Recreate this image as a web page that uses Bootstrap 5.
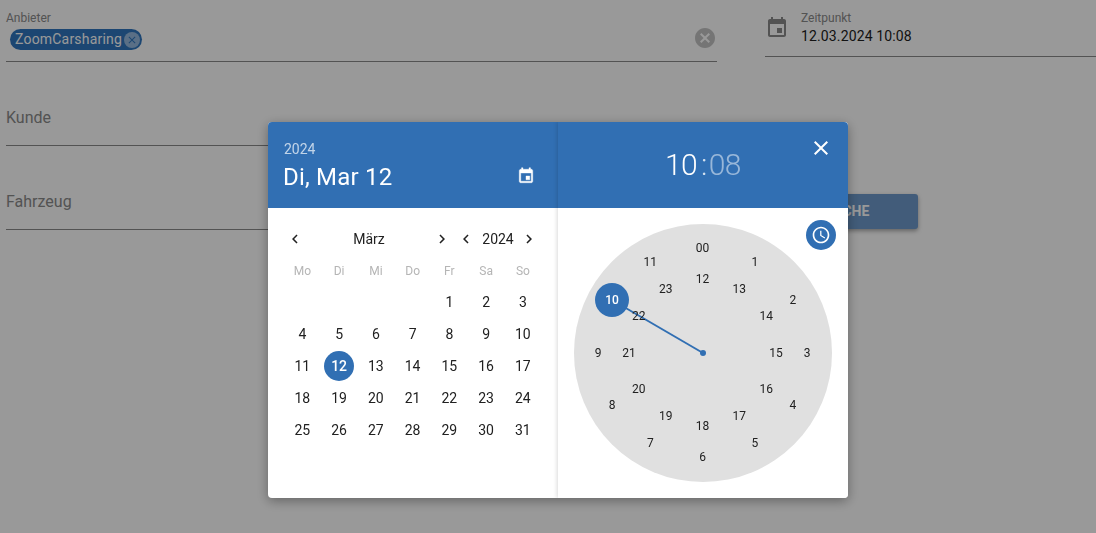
<!DOCTYPE html>
<html lang="de">
<head>
    <meta charset="UTF-8">
    <title>Zeitpunkt</title>
    <link href="https://cdn.jsdelivr.net/npm/bootstrap@5.3.0/dist/css/bootstrap.min.css" rel="stylesheet">
    <style>
        html, body { height: 100%; overflow: hidden; }
        body { background: #fff; color: #212121; font-family: Roboto, "Liberation Sans", sans-serif; font-size: 14px; }

        /* form behind the dialog */
        .form-side { width: 717px; padding-left: 6px; flex-shrink: 0; }
        .time-side { margin-left: 48px; flex-grow: 1; }
        .field-a { height: 62px; border-bottom: 1px solid #8a8a8a; padding-top: 11px; }
        .field-b { height: 84px; border-bottom: 1px solid #8a8a8a; padding-top: 45px; font-size: 16px; line-height: 22px; color: #8a8a8a; }
        .mini-label { font-size: 12px; line-height: 14px; color: #8a8a8a; }
        .pick-chip { margin: 4px 0 0 4px; height: 21px; background: #2f75be; color: #fff; border-radius: 11px; padding: 0 2px 0 5px; font-size: 14px; letter-spacing: .2px; line-height: 21px; width: 132px; }
        .chip-x { width: 16px; height: 16px; border-radius: 50%; background: rgba(255,255,255,.5); }
        .clear-x { margin: 1px 0 0 auto; width: 24px; height: 24px; display: block; fill: #c4c4c4; }
        .time-field { height: 57px; border-bottom: 1px solid #8a8a8a; padding: 11px 0 0 36px; position: relative; }
        .time-field svg { position: absolute; left: 0; top: 16px; fill: #8a8a8a; }
        .time-val { line-height: 20px; margin-top: 1px; letter-spacing: .13px; }
        .search-btn { width: 142px; height: 35px; margin: 137px 0 0 11px; background: #6e9acb; color: #fff; font-weight: 700; font-size: 14px; border: 0; border-radius: 3px; box-shadow: 0 2px 4px rgba(0,0,0,.35); }

        /* dialog */
        .modal-backdrop { --bs-backdrop-opacity: .4; }
        .dt-dialog { position: fixed; z-index: 1060; left: 268px; top: 122px; width: 580px; height: 376px; background: #fff; border-radius: 4px; overflow: hidden; box-shadow: 0 3px 12px rgba(0,0,0,.35); }
        .date-pane { width: 290px; }
        .time-pane { flex-grow: 1; position: relative; background: #fff; box-shadow: -1px 0 4px rgba(0,0,0,.15); }
        .pane-head { height: 86px; background: #316fb3; color: #fff; position: relative; }
        .head-year { position: absolute; left: 16px; top: 18px; font-size: 14px; line-height: 18px; opacity: .7; }
        .head-date { position: absolute; left: 15px; top: 39px; font-size: 24px; line-height: 32px; letter-spacing: .2px; }
        .head-cal { position: absolute; left: 249px; top: 45px; fill: #fff; stroke: #fff; stroke-width: .5; }
        .head-time { position: absolute; left: 107px; top: 25px; font-size: 30px; font-weight: 300; line-height: 36px; letter-spacing: -.6px; white-space: nowrap; }
        .head-time i { font-style: normal; opacity: .8; margin: 0 2px 0 4px; }
        .head-time span { opacity: .5; }
        .head-close { position: absolute; right: 15px; top: 14px; fill: #fff; }

        .month-bar { height: 20px; margin-top: 21px; position: relative; }
        .month-bar svg { position: absolute; top: 1px; fill: #212121; }
        .month-bar b { position: absolute; font-weight: 400; line-height: 20px; transform: translateX(-50%); }
        .day-grid { display: grid; grid-template-columns: repeat(7, 36.75px); grid-template-rows: 27px; grid-auto-rows: 32px; margin: 10px 0 0 16px; text-align: center; line-height: 32px; }
        .week-name { font-size: 12px; color: #b5b5b5; line-height: 24px; }
        .day-on { width: 30px; height: 30px; line-height: 30px; margin: 1px auto; border-radius: 50%; background: #316fb3; color: #fff; font-weight: 500; }

        .clock-face { position: absolute; left: 16px; top: 16px; width: 258px; height: 258px; border-radius: 50%; background: #e0e0e0; }
        .clock-num { position: absolute; width: 30px; height: 20px; margin: -10px 0 0 -15px; text-align: center; font-size: 12px; line-height: 20px; color: #212121; }
        .clock-sel { width: 34px; height: 34px; line-height: 34px; margin: -17px 0 0 -17px; border-radius: 50%; background: #316fb3; color: #fff; font-weight: 500; }
        .clock-hand { position: absolute; left: 0; top: 0; width: 258px; height: 258px; }
        .clock-toggle { position: absolute; right: 12px; top: 12px; width: 30px; height: 30px; border-radius: 50%; background: #316fb3; fill: #fff; }
    </style>
</head>
<body>
    <div class="d-flex">
        <div class="form-side">
            <div class="field-a">
                <div class="mini-label">Anbieter</div>
                <div class="d-flex">
                    <div class="pick-chip d-flex align-items-center justify-content-between">
                        <span>ZoomCarsharing</span>
                        <span class="chip-x d-flex align-items-center justify-content-center">
                            <svg width="12" height="12" viewBox="0 0 24 24" fill="#2f75be"><path d="M19 6.41L17.59 5 12 10.59 6.41 5 5 6.41 10.59 12 5 17.59 6.41 19 12 13.41 17.59 19 19 17.59 13.41 12z"/></svg>
                        </span>
                    </div>
                    <svg class="clear-x" viewBox="0 0 24 24"><path d="M12 2C6.47 2 2 6.47 2 12s4.47 10 10 10 10-4.47 10-10S17.53 2 12 2zm5 13.59L15.59 17 12 13.41 8.41 17 7 15.59 10.59 12 7 8.41 8.41 7 12 10.59 15.59 7 17 8.41 13.41 12 17 15.59z"/></svg>
                </div>
            </div>
            <div class="field-b">Kunde</div>
            <div class="field-b">Fahrzeug</div>
        </div>
        <div class="time-side">
            <div class="time-field">
                <svg width="24" height="24" viewBox="0 0 24 24"><path d="M17 12h-5v5h5v-5zM16 1v2H8V1H6v2H5c-1.11 0-1.99.9-1.99 2L3 19c0 1.1.89 2 2 2h14c1.1 0 2-.9 2-2V5c0-1.1-.9-2-2-2h-1V1h-2zm3 18H5V8h14v11z"/></svg>
                <div class="mini-label">Zeitpunkt</div>
                <div class="time-val">12.03.2024 10:08</div>
            </div>
            <button class="search-btn" type="button">SUCHE</button>
        </div>
    </div>

    <div class="modal-backdrop show"></div>

    <div class="dt-dialog d-flex">
        <div class="date-pane">
            <div class="pane-head">
                <div class="head-year">2024</div>
                <div class="head-date">Di, Mar 12</div>
                <svg class="head-cal" width="18" height="18" viewBox="0 0 24 24"><path d="M17 12h-5v5h5v-5zM16 1v2H8V1H6v2H5c-1.11 0-1.99.9-1.99 2L3 19c0 1.1.89 2 2 2h14c1.1 0 2-.9 2-2V5c0-1.1-.9-2-2-2h-1V1h-2zm3 18H5V8h14v11z"/></svg>
            </div>
            <div class="month-bar">
                <svg style="left:18px" width="18" height="18" viewBox="0 0 24 24"><path d="M15.41 7.41L14 6l-6 6 6 6 1.41-1.41L10.83 12z"/></svg>
                <b style="left:101px">März</b>
                <svg style="left:165px" width="18" height="18" viewBox="0 0 24 24"><path d="M10 6L8.59 7.41 13.17 12l-4.58 4.59L10 18l6-6z"/></svg>
                <svg style="left:189px" width="18" height="18" viewBox="0 0 24 24"><path d="M15.41 7.41L14 6l-6 6 6 6 1.41-1.41L10.83 12z"/></svg>
                <b style="left:230px">2024</b>
                <svg style="left:252px" width="18" height="18" viewBox="0 0 24 24"><path d="M10 6L8.59 7.41 13.17 12l-4.58 4.59L10 18l6-6z"/></svg>
            </div>
            <div class="day-grid" id="days"></div>
        </div>
        <div class="time-pane">
            <div class="pane-head">
                <div class="head-time">10<i>:</i><span>08</span></div>
                <svg class="head-close" width="24" height="24" viewBox="0 0 24 24"><path d="M19 6.41L17.59 5 12 10.59 6.41 5 5 6.41 10.59 12 5 17.59 6.41 19 12 13.41 17.59 19 19 17.59 13.41 12z"/></svg>
            </div>
            <div class="position-relative">
                <div class="clock-face" id="clock">
                    <svg class="clock-hand" viewBox="0 0 258 258">
                        <line x1="129" y1="129" x2="38" y2="76" stroke="#316fb3" stroke-width="2"/>
                        <circle cx="129" cy="129" r="3" fill="#316fb3"/>
                    </svg>
                </div>
                <div class="clock-toggle d-flex align-items-center justify-content-center">
                    <svg width="20" height="20" viewBox="0 0 24 24"><path d="M11.99 2C6.47 2 2 6.48 2 12s4.47 10 9.99 10C17.52 22 22 17.52 22 12S17.52 2 11.99 2zM12 20c-4.42 0-8-3.58-8-8s3.58-8 8-8 8 3.58 8 8-3.58 8-8 8zm.5-13H11v6l5.25 3.15.75-1.23-4.5-2.67z"/></svg>
                </div>
            </div>
        </div>
    </div>

    <script>
        // calendar for März 2024
        const days = document.getElementById("days");
        ["Mo", "Di", "Mi", "Do", "Fr", "Sa", "So"].forEach(function (n) {
            days.insertAdjacentHTML("beforeend", `<div class="week-name">${n}</div>`);
        });
        for (let i = 0; i < 4; i++) days.insertAdjacentHTML("beforeend", "<div></div>");
        for (let d = 1; d <= 31; d++) {
            days.insertAdjacentHTML("beforeend", d === 12 ? `<div class="day-on">${d}</div>` : `<div>${d}</div>`);
        }

        // hour labels on the clock
        const clock = document.getElementById("clock");
        for (let h = 0; h < 24; h++) {
            const angle = (h % 12) * Math.PI / 6;
            const r = h < 12 ? 104.5 : 73.5;
            const x = 128.5 + r * Math.sin(angle);
            const y = 128.5 - r * Math.cos(angle);
            const label = h === 0 ? "00" : String(h);
            const cls = h === 10 ? "clock-num clock-sel" : "clock-num";
            clock.insertAdjacentHTML("beforeend", `<div class="${cls}" style="left:${x}px;top:${y}px">${label}</div>`);
        }
    </script>
    <script src="https://cdn.jsdelivr.net/npm/bootstrap@5.3.0/dist/js/bootstrap.bundle.min.js"></script>
</body>
</html>
